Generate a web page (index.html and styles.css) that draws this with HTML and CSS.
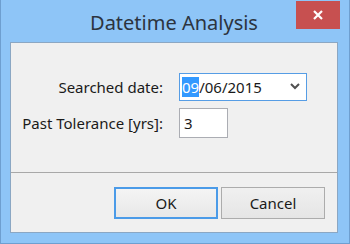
FILE: index.html
```html
<!DOCTYPE html>
<html lang="en">

<head>
    <meta charset="UTF-8">
    <title>Datetime Analysis</title>
    <link rel="stylesheet" href="styles.css">
</head>

<body>
    <div class="window">
        <!-- title bar -->
        <div class="titlebar">
            <span class="title">Datetime Analysis</span>
            <div class="close">
                <svg width="12" height="10" viewBox="0 0 12 10">
                    <path d="M2 1 L10 9 M10 1 L2 9" stroke="#fff" stroke-width="2.2" fill="none"/>
                </svg>
            </div>
        </div>

        <div class="client">
            <!-- fields -->
            <div class="form">
                <label class="lbl">Searched date:</label>
                <div class="datebox">
                    <span class="sel">09</span><span>/06/2015</span>
                    <svg class="chev" width="10" height="7" viewBox="0 0 10 7">
                        <polyline points="1,1 5,5 9,1" stroke="#505050" stroke-width="2" fill="none"/>
                    </svg>
                </div>
                <label class="lbl">Past Tolerance [yrs]:</label>
                <div class="numbox">3</div>
            </div>

            <!-- buttons -->
            <div class="footer">
                <button class="btn btn-default">OK</button>
                <button class="btn">Cancel</button>
            </div>
        </div>
    </div>
</body>

</html>
```

FILE: styles.css
```css
* {
    margin: 0;
    padding: 0;
    box-sizing: border-box;
}

body {
    width: 350px;
    height: 244px;
    overflow: hidden;
    font-family: "Segoe UI", "Noto Sans", sans-serif;
}

.window {
    width: 350px;
    height: 244px;
    background-color: #8ec5f7;
    border-left: 1px solid #6e9fd0;
    border-right: 1px solid #6e9fd0;
    border-bottom: 1px solid #6e9fd0;
    padding: 0 11px 10px 9px;
    display: flex;
    flex-direction: column;
}

.titlebar {
    height: 42px;
    display: flex;
    justify-content: center;
    align-items: flex-start;
    position: relative;
}

.title {
    font-size: 20px;
    color: #2c3440;
    margin-top: 9px;
}

.close {
    position: absolute;
    right: -2px;
    top: 1px;
    width: 44px;
    height: 28px;
    background-color: #c75050;
    display: flex;
    justify-content: center;
    align-items: center;
}

.client {
    flex: 1;
    background-color: #f0f0f0;
    border: 1px solid #8ba7c3;
    display: flex;
    flex-direction: column;
}

.form {
    height: 129px;
    display: grid;
    grid-template-columns: 143px 128px;
    grid-auto-rows: min-content;
    column-gap: 16px;
    row-gap: 7px;
    padding: 30px 0 0 9px;
    font-size: 15px;
    color: #1a1a1a;
    align-items: center;
}

.lbl {
    justify-self: end;
    white-space: nowrap;
}

.datebox {
    height: 28px;
    background-color: #fff;
    border: 1px solid #569de5;
    display: flex;
    align-items: center;
    padding-left: 2px;
    position: relative;
}

.sel {
    background-color: #3399ff;
    color: #fff;
}

.chev {
    position: absolute;
    right: 6px;
    top: 9px;
}

.numbox {
    width: 49px;
    height: 30px;
    background-color: #fff;
    border: 1px solid #abadb3;
    display: flex;
    align-items: center;
    padding-left: 4px;
}

.footer {
    flex: 1;
    border-top: 1px solid #a8a8a8;
    display: flex;
    justify-content: flex-end;
    align-items: flex-start;
    gap: 3px;
    padding: 14px 12px 0 0;
}

.btn {
    width: 104px;
    height: 32px;
    font-family: "Segoe UI", "Noto Sans", sans-serif;
    font-size: 15px;
    color: #1a1a1a;
    background: linear-gradient(#f0f0f0, #e5e5e5);
    border: 1px solid #acacac;
}

.btn-default {
    border: 2px solid #4b9be8;
    background: linear-gradient(#f4f4f4, #e8e8e8);
}
```
